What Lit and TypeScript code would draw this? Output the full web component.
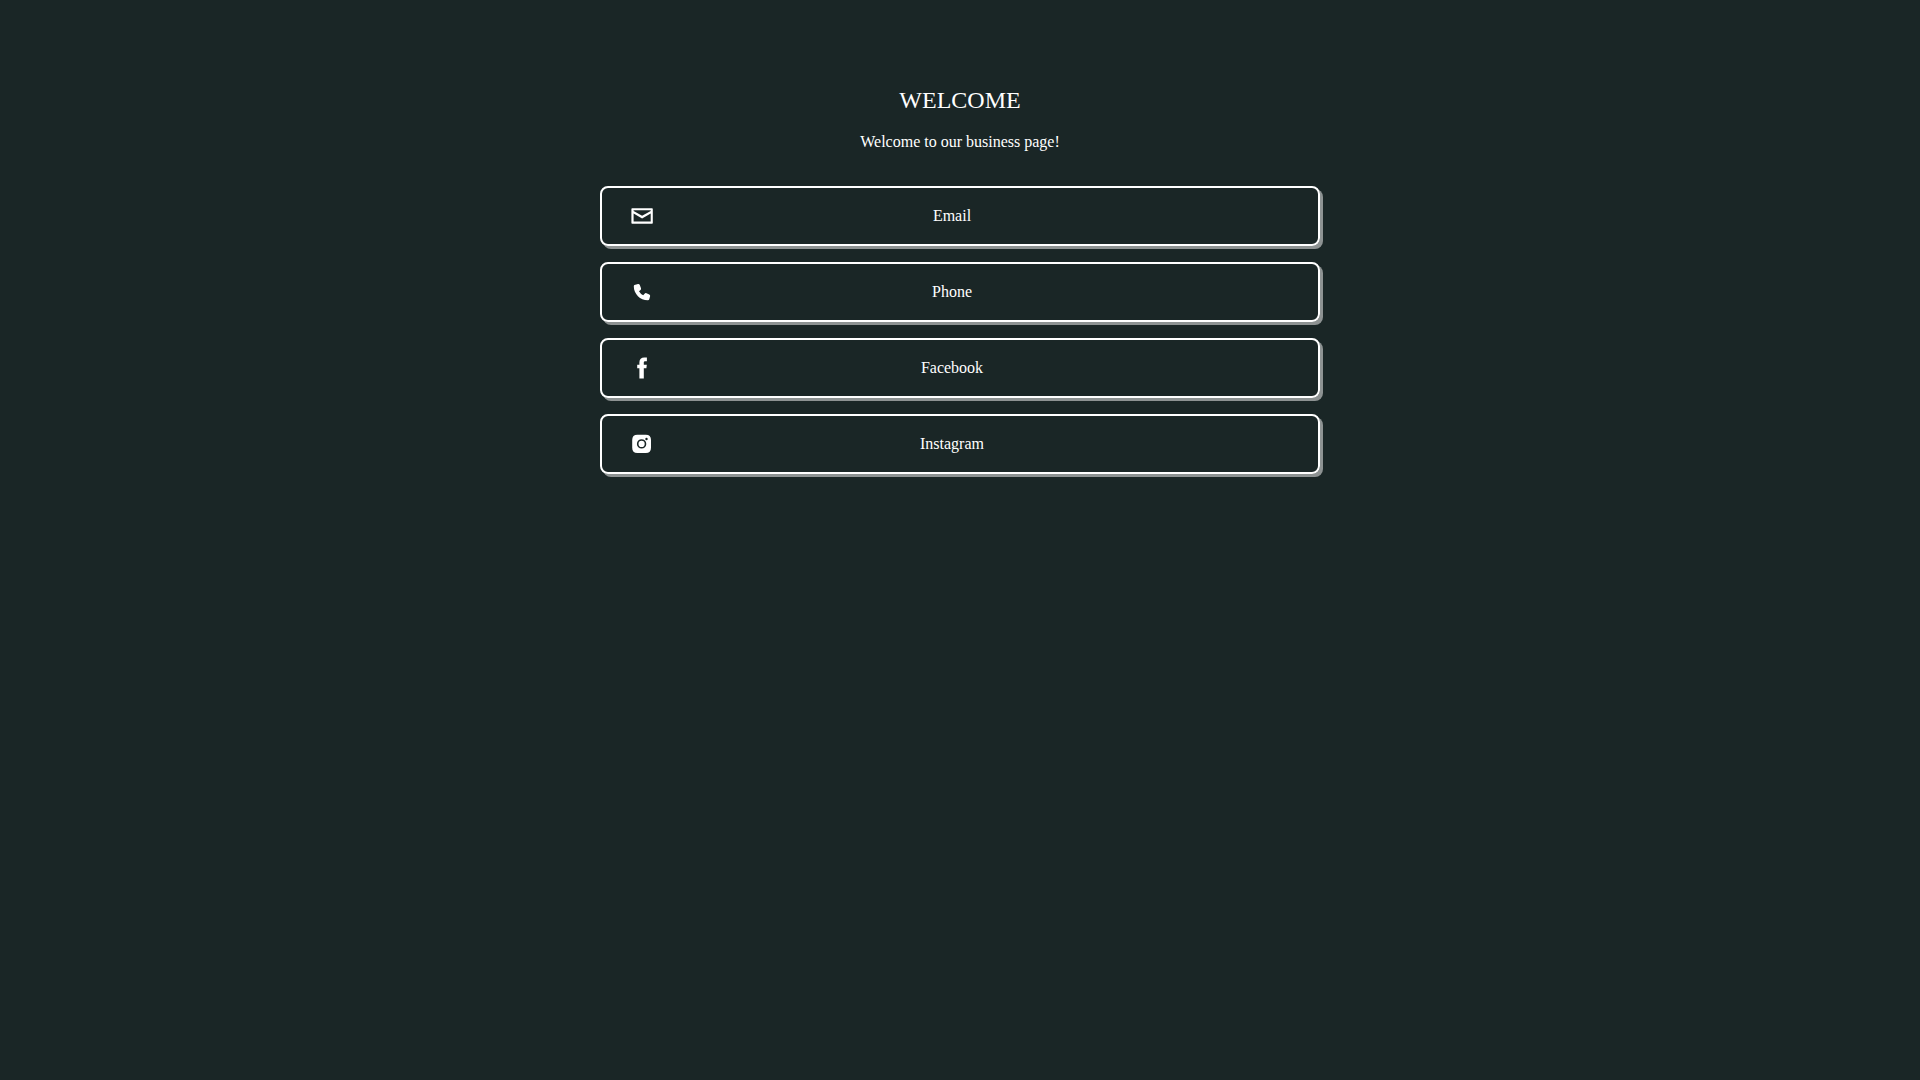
import { LitElement, html, css, svg } from "lit";
import { customElement } from "lit/decorators.js";

const icons = {
  email: svg`<path fill-rule="evenodd" d="M2.2 4.3H22Q22.8 4.3 22.8 5.1V18.9Q22.8 19.7 22 19.7H2.2Q1.4 19.7 1.4 18.9V5.1Q1.4 4.3 2.2 4.3ZM3.6 9.4V17.6H20.7V9.4L12.1 14.4ZM3.6 6.3V6.9L12.1 11.7L20.7 6.9V6.3Z"/>`,
  phone: svg`<path d="M4.4 5.1L8 4.1Q9.3 3.9 9.8 5L11 8.3Q11.3 9.4 10.5 10.1L9 11.3Q10.6 14.2 13.2 15.2L14.6 13.7Q15.4 12.8 16.5 13.3L19.3 14.5Q20.4 15 20.1 16.2L19.3 19.2Q19 20.2 17.8 20.2C10.2 20.2 3.8 13.8 3.8 6.4Q3.8 5.4 4.4 5.1Z"/>`,
  facebook: svg`<path d="M16.9 1.6V5.2H15.3C14.1 5.2 13.8 5.7 13.8 6.7V8.7H16.8L16.4 12.2H13.8V22.5H9.4V12.2H7.2V8.7H9.4V6.3C9.4 3.1 11.3 1.4 14.3 1.4C15.4 1.4 16.4 1.5 16.9 1.6Z"/>`,
  instagram: svg`<path fill-rule="evenodd" d="M7.4 2.8H15.8Q21 2.8 21 8V15.8Q21 21 15.8 21H7.4Q2.2 21 2.2 15.8V8Q2.2 2.8 7.4 2.8ZM11.6 7.2A4.7 4.7 0 1 0 11.6 16.6A4.7 4.7 0 1 0 11.6 7.2ZM11.6 8.8A3.1 3.1 0 1 1 11.6 15A3.1 3.1 0 1 1 11.6 8.8ZM16.5 5.8A1.2 1.2 0 1 0 16.5 8.2A1.2 1.2 0 1 0 16.5 5.8Z"/>`,
};

const links = [
  { label: "Email", href: "#email", icon: icons.email },
  { label: "Phone", href: "#phone", icon: icons.phone },
  { label: "Facebook", href: "#facebook", icon: icons.facebook },
  { label: "Instagram", href: "#instagram", icon: icons.instagram },
];

@customElement("app-root")
export class AppRoot extends LitElement {
  static styles = css`
    :host {
      display: block;
      min-height: 100vh;
      background: #1a2626;
      color: #fff;
      font: 16px/20px "Liberation Serif", "Times New Roman", serif;
    }
    .page {
      box-sizing: border-box;
      max-width: 720px;
      margin: 0 auto;
      padding: 84px 0 40px;
      text-align: center;
    }
    .title {
      margin: 0;
      font-size: 24px;
      line-height: 32px;
      font-weight: 400;
    }
    .intro {
      margin: 16px 0 34px;
    }
    .links {
      display: grid;
      gap: 16px;
      margin: 0;
      padding: 0;
      list-style: none;
    }
    .link {
      box-sizing: border-box;
      display: flex;
      align-items: center;
      min-height: 60px;
      padding: 0 68px 0 28px;
      border: 2px solid #fff;
      border-radius: 8px;
      box-shadow: 3px 3px 0 #8d9292;
      color: inherit;
      text-decoration: none;
    }
    .icon {
      flex: none;
      width: 24px;
      height: 24px;
      fill: #fff;
    }
    .label {
      flex: 1;
    }
  `;

  render() {
    return html`
      <main class="page">
        <h1 class="title">WELCOME</h1>
        <p class="intro">Welcome to our business page!</p>
        <ul class="links">
          ${links.map(
            (link) => html`
              <li>
                <a class="link" href=${link.href}>
                  <svg class="icon" viewBox="0 0 24 24" aria-hidden="true">${link.icon}</svg>
                  <span class="label">${link.label}</span>
                </a>
              </li>
            `,
          )}
        </ul>
      </main>
    `;
  }
}
